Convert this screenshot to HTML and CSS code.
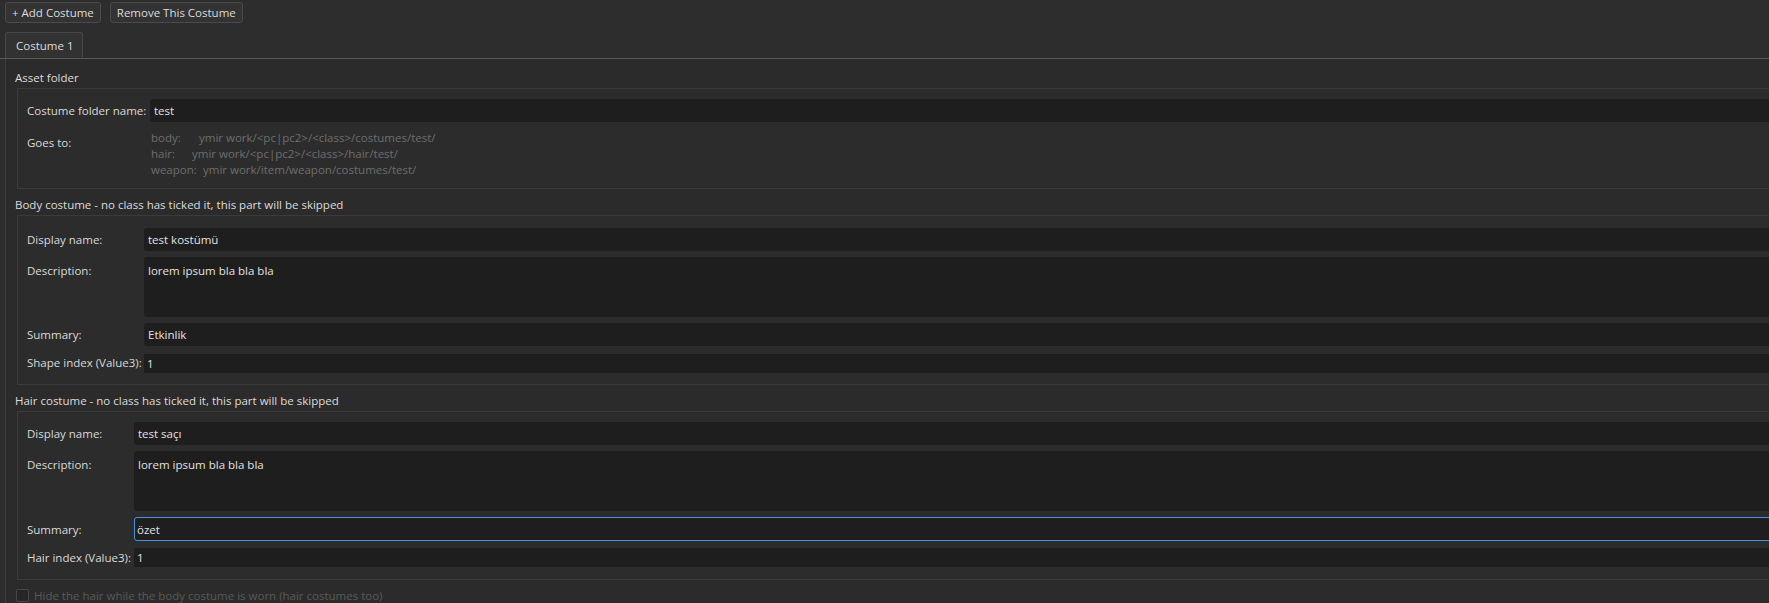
FILE: index.html
```html
<!DOCTYPE html>
<html>
<head>
<meta charset="utf-8">
<link rel="stylesheet" href="styles.css">
</head>
<body>
<div class="app">
  <div class="toolbar">
    <button class="btn">+ Add Costume</button>
    <button class="btn">Remove This Costume</button>
  </div>
  <div class="tabs">
    <div class="tab">Costume 1</div>
  </div>
  <div class="pane">
    <div class="section-title">Asset folder</div>
    <div class="group g1">
      <div class="lbl mid">Costume folder name:</div>
      <div class="field"><span>test</span></div>
      <div class="lbl goes">Goes to:</div>
      <div class="paths">
        <div class="path"><span class="k kb">body:</span>ymir work/&lt;pc|pc2&gt;/&lt;class&gt;/costumes/test/</div>
        <div class="path"><span class="k kh">hair:</span>ymir work/&lt;pc|pc2&gt;/&lt;class&gt;/hair/test/</div>
        <div class="path"><span class="k kw">weapon:</span>ymir work/item/weapon/costumes/test/</div>
      </div>
    </div>

    <div class="section-title">Body costume - no class has ticked it, this part will be skipped</div>
    <div class="group g2">
      <div class="lbl mid">Display name:</div>
      <div class="field"><span>test kostümü</span></div>
      <div class="lbl top">Description:</div>
      <div class="field area"><span>lorem ipsum bla bla bla</span></div>
      <div class="lbl mid">Summary:</div>
      <div class="field"><span>Etkinlik</span></div>
      <div class="lbl mid">Shape index (Value3):</div>
      <div class="field spin"><span>1</span></div>
    </div>

    <div class="section-title">Hair costume - no class has ticked it, this part will be skipped</div>
    <div class="group g3">
      <div class="lbl mid">Display name:</div>
      <div class="field"><span>test saçı</span></div>
      <div class="lbl top">Description:</div>
      <div class="field area"><span>lorem ipsum bla bla bla</span></div>
      <div class="lbl mid">Summary:</div>
      <div class="field focus"><span>özet</span></div>
      <div class="lbl mid">Hair index (Value3):</div>
      <div class="field spin"><span>1</span></div>
    </div>

    <div class="check-row">
      <span class="checkbox"></span>
      <span class="check-label">Hide the hair while the body costume is worn (hair costumes too)</span>
    </div>
  </div>
</div>
</body>
</html>
```

FILE: styles.css
```css
html, body {
  margin: 0;
  padding: 0;
  background: #2d2d2d;
  overflow: hidden;
}
body {
  width: 1769px;
  height: 603px;
  font-family: "Open Sans", "Noto Sans", sans-serif;
  font-size: 11.5px;
  color: #dadada;
}
.app {
  width: 1900px;
}
.toolbar {
  display: flex;
  gap: 9px;
  padding: 2px 0 0 5px;
  height: 30px;
  box-sizing: border-box;
}
.btn {
  height: 21px;
  padding: 0 6px;
  font: inherit;
  color: #dcdcdc;
  background: #333333;
  border: 1px solid #4a4a4a;
  border-radius: 3px;
}
.tabs {
  display: flex;
  padding-left: 5px;
  height: 29px;
  box-sizing: border-box;
  padding-top: 2px;
  border-bottom: 1px solid #575757;
}
.tab {
  width: 78px;
  box-sizing: border-box;
  border: 1px solid #484848;
  border-bottom: none;
  border-radius: 3px 3px 0 0;
  background: #323232;
  padding: 5px 0 0 10px;
  color: #dcdcdc;
}
.pane {
  margin-left: 5px;
  border-left: 1px solid #3e3e3e;
  background: #2b2b2b;
  padding: 11px 0 0 0;
  height: 600px;
}
.section-title {
  height: 16px;
  line-height: 16px;
  padding-left: 9px;
  margin-bottom: 2px;
  color: #dcdcdc;
}
.group {
  margin-left: 11px;
  border: 1px solid #3b3b3b;
  background: #2c2c2c;
  display: grid;
  row-gap: 6px;
  padding: 10px 0 9px 9px;
  margin-bottom: 8px;
}
.g1 { grid-template-columns: 123px 1fr; row-gap: 8px; padding-bottom: 10px; }
.g2 { grid-template-columns: 117px 1fr; padding-top: 12px; padding-bottom: 11px; }
.g3 { grid-template-columns: 107px 1fr; padding-top: 10px; padding-bottom: 12px; }
.lbl {
  color: #dadada;
  white-space: nowrap;
}
.lbl.mid { align-self: center; }
.lbl.top { padding-top: 6px; }
.lbl.goes { padding-top: 5px; }
.field {
  height: 23px;
  box-sizing: border-box;
  background: #1e1e1e;
  border-radius: 3px 0 0 3px;
  padding: 0 4px;
  display: flex;
  align-items: center;
  color: #e2e2e2;
}
.field.area {
  height: 60px;
  align-items: flex-start;
  padding-top: 6px;
}
.field.spin {
  height: 19px;
  border-radius: 0;
  padding-left: 3px;
}
.field.focus {
  height: 24px;
  border: 1px solid #4694e0;
  padding-left: 2px;
}
.g2 .field.spin { margin-top: 2px; }
.g3 .field.spin { margin-top: 1px; }
.paths {
  color: #6e6e6e;
  line-height: 16px;
  padding-left: 1px;
}
.path {
  white-space: nowrap;
  display: flex;
}
.k { display: inline-block; }
.kb { width: 48px; }
.kh { width: 41px; }
.kw { width: 52px; }
.check-row {
  display: flex;
  align-items: center;
  gap: 5px;
  padding-left: 10px;
}
.checkbox {
  width: 13px;
  height: 13px;
  box-sizing: border-box;
  border: 1px solid #474747;
  background: #262626;
  border-radius: 2px;
}
.check-label {
  color: #5a5a5a;
}
```
